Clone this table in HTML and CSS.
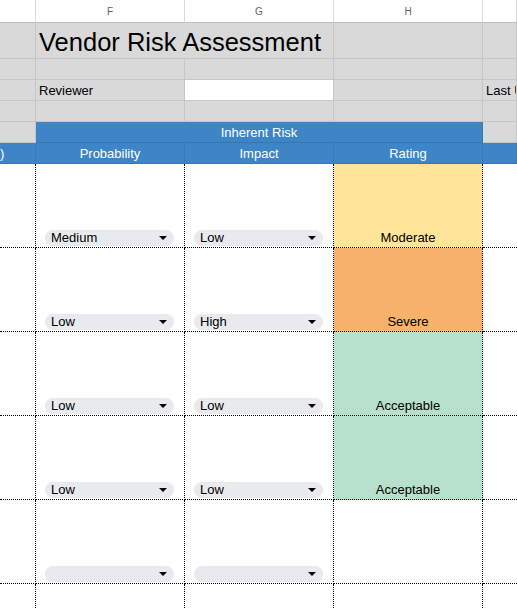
FILE: index.html
```html
<!DOCTYPE html>
<html>
<head>
<meta charset="utf-8">
<link rel="stylesheet" href="styles.css">
</head>
<body>
<div class="sheet">
  <!-- column header row -->
  <div class="c hd"></div>
  <div class="c hd">F</div>
  <div class="c hd">G</div>
  <div class="c hd">H</div>
  <div class="c hd last"></div>

  <!-- title row -->
  <div class="c g r-title"></div>
  <div class="c g r-title span2 title">Vendor Risk Assessment</div>
  <div class="c g r-title"></div>
  <div class="c g r-title last"></div>

  <div class="c g r-s"></div>
  <div class="c g r-s"></div>
  <div class="c g r-s"></div>
  <div class="c g r-s"></div>
  <div class="c g r-s last"></div>

  <div class="c g r-s"></div>
  <div class="c g r-s">Reviewer</div>
  <div class="c w r-s"></div>
  <div class="c g r-s"></div>
  <div class="c g r-s last">Last U</div>

  <div class="c g r-s"></div>
  <div class="c g r-s"></div>
  <div class="c g r-s"></div>
  <div class="c g r-s"></div>
  <div class="c g r-s last"></div>

  <div class="c g r-s"></div>
  <div class="c b r-s span3 center">Inherent Risk</div>
  <div class="c g r-s last"></div>

  <div class="c b r-s lead">)</div>
  <div class="c b r-s center">Probability</div>
  <div class="c b r-s center">Impact</div>
  <div class="c b r-s center">Rating</div>
  <div class="c b r-s last"></div>

  <!-- data rows -->
  <div class="c d"></div>
  <div class="c d"><div class="chip"><span>Medium</span><i class="arrow"></i></div></div>
  <div class="c d"><div class="chip"><span>Low</span><i class="arrow"></i></div></div>
  <div class="c d rating moderate">Moderate</div>
  <div class="c d last"></div>

  <div class="c d"></div>
  <div class="c d"><div class="chip"><span>Low</span><i class="arrow"></i></div></div>
  <div class="c d"><div class="chip"><span>High</span><i class="arrow"></i></div></div>
  <div class="c d rating severe">Severe</div>
  <div class="c d last"></div>

  <div class="c d"></div>
  <div class="c d"><div class="chip"><span>Low</span><i class="arrow"></i></div></div>
  <div class="c d"><div class="chip"><span>Low</span><i class="arrow"></i></div></div>
  <div class="c d rating acceptable">Acceptable</div>
  <div class="c d last"></div>

  <div class="c d"></div>
  <div class="c d"><div class="chip"><span>Low</span><i class="arrow"></i></div></div>
  <div class="c d"><div class="chip"><span>Low</span><i class="arrow"></i></div></div>
  <div class="c d rating acceptable">Acceptable</div>
  <div class="c d last"></div>

  <div class="c d"></div>
  <div class="c d"><div class="chip"><span></span><i class="arrow"></i></div></div>
  <div class="c d"><div class="chip"><span></span><i class="arrow"></i></div></div>
  <div class="c d rating"></div>
  <div class="c d last"></div>

  <div class="c d"></div>
  <div class="c d"></div>
  <div class="c d"></div>
  <div class="c d"></div>
  <div class="c d last"></div>
</div>
</body>
</html>
```

FILE: styles.css
```css
html, body {
  margin: 0;
  padding: 0;
  background: #ffffff;
  overflow: hidden;
}
body {
  width: 517px;
  height: 609px;
  font-family: "Liberation Sans", Arial, sans-serif;
  font-size: 13px;
  color: #000;
}
.sheet {
  display: grid;
  grid-template-columns: 36px 149px 149px 149px 1fr;
  grid-template-rows: 23px 36px 21px 21px 21px 21px 21px 84px 84px 84px 84px 84px 40px;
  width: 517px;
  height: 609px;
  overflow: hidden;
}
.c {
  box-sizing: border-box;
  border-right: 1px solid #c6c6c6;
  border-bottom: 1px solid #c6c6c6;
  display: flex;
  align-items: flex-end;
  padding: 0 3px 2px 3px;
  white-space: nowrap;
  overflow: hidden;
  line-height: 15px;
}
.hd {
  background: #fff;
  border-right-color: #dadada;
  border-bottom-color: #c0c0c0;
  justify-content: center;
  align-items: center;
  padding: 0;
  font-size: 10px;
  color: #5f6368;
}
.g { background: #d9d9d9; }
.w { background: #ffffff; }
.b {
  background: #3d85c6;
  color: #fff;
  border-right-color: rgba(0, 0, 0, 0.08);
  border-bottom-color: rgba(0, 0, 0, 0.1);
}
.span2 { grid-column: span 2; }
.span3 { grid-column: span 3; }
.center { justify-content: center; }
.lead { justify-content: flex-start; padding-left: 0; }
.title {
  font-size: 25.5px;
  line-height: 29px;
  padding-bottom: 1px;
}
.d {
  background: #fff;
  border-right: 1px dotted #000;
  border-bottom: 1px dotted #000;
  padding: 0 10px 1px 9px;
}
.d.last { border-right: none; }
.chip {
  flex: 1;
  height: 16px;
  border-radius: 8px;
  background: #e8eaed;
  display: flex;
  align-items: center;
  justify-content: space-between;
  padding: 0 7px 0 6px;
  line-height: 16px;
}
.arrow {
  width: 0;
  height: 0;
  border-left: 4px solid transparent;
  border-right: 4px solid transparent;
  border-top: 4px solid #000;
}
.rating {
  justify-content: center;
  padding: 0 3px 1px 3px;
  line-height: 16px;
}
.moderate { background: #ffe599; }
.severe { background: #f6b26b; }
.acceptable { background: #b7e1cd; }
```
